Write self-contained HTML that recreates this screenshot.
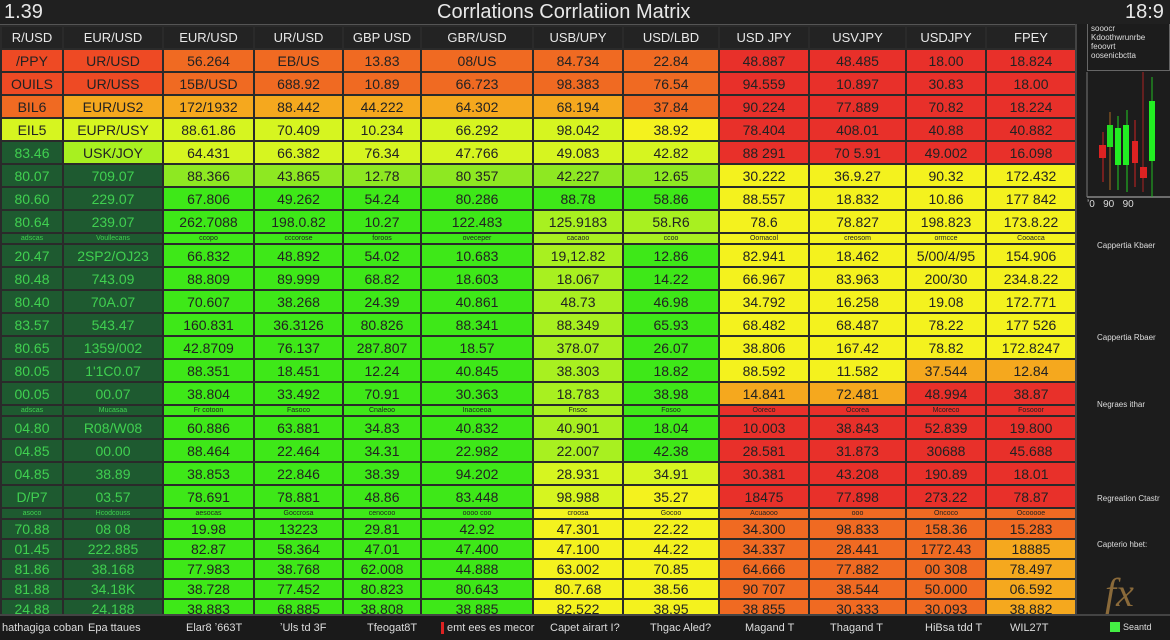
<!DOCTYPE html><html><head><meta charset="utf-8"><style>
body{margin:0;width:1170px;height:638px;background:#1e1e1e;overflow:hidden;font-family:"Liberation Sans",sans-serif;position:relative}
.top{position:absolute;left:0;top:0;width:1170px;height:24px;background:#202020;border-bottom:2px solid #555}
.top span{position:absolute;color:#e8e8e8;font-size:20px;top:1px}
table{position:absolute;left:0;top:25px;border-collapse:collapse;table-layout:fixed;width:1075px}
td{border:2px solid #2a2a2a;text-align:center;font-size:14px;color:#222;padding:0;white-space:nowrap;overflow:hidden;height:21px;line-height:18px}
tr.h td{background:#232323;color:#e8e8e8;font-size:13px;height:21px}
tr.t td{height:9px;font-size:7px;line-height:8px}
tr.s td{height:17px}
.r{background:#e8302a}.o{background:#f06a22}.oy{background:#f5a81e}.y{background:#f4f21e}.yg{background:#d6f520}.lg{background:#8ee822}.g{background:#3ee818}.dg{background:#1e5a30;color:#40d050}.l{background:#a8f020}.ro{background:#ee4a24}
.side{position:absolute;left:1075px;top:24px;width:95px;height:590px;background:#1c1c1c;border-left:2px solid #444}
.side div{position:absolute;color:#ddd;font-size:8px}
.foot{position:absolute;left:0;top:614px;width:1170px;height:24px;background:#1a1a1a;border-top:2px solid #444}
.foot span{position:absolute;top:6px;color:#ddd;font-size:11px}
</style></head><body>
<div class="top"><span style="left:4px">1.39</span><span style="left:437px">Corrlations Corrlatiion Matrix</span><span style="left:1125px">18:9</span></div>
<table>
<colgroup><col style="width:62px"><col style="width:100px"><col style="width:91px"><col style="width:89px"><col style="width:78px"><col style="width:112px"><col style="width:90px"><col style="width:96px"><col style="width:90px"><col style="width:97px"><col style="width:80px"><col style="width:90px"></colgroup>
<tr class="h"><td>R/USD</td><td>EUR/USD</td><td>EUR/USD</td><td>UR/USD</td><td>GBP USD</td><td>GBR/USD</td><td>USB/UPY</td><td>USD/LBD</td><td>USD JPY</td><td>USVJPY</td><td>USDJPY</td><td>FPEY</td></tr>
<tr><td class="ro">/PPY</td><td class="ro">UR/USD</td><td class="o">56.264</td><td class="o">EB/US</td><td class="o">13.83</td><td class="o">08/US</td><td class="o">84.734</td><td class="o">22.84</td><td class="r">48.887</td><td class="r">48.485</td><td class="r">18.00</td><td class="r">18.824</td></tr>
<tr><td class="ro">OUILS</td><td class="ro">UR/USS</td><td class="o">15B/USD</td><td class="o">688.92</td><td class="o">10.89</td><td class="o">66.723</td><td class="o">98.383</td><td class="o">76.54</td><td class="r">94.559</td><td class="r">10.897</td><td class="r">30.83</td><td class="r">18.00</td></tr>
<tr><td class="o">BIL6</td><td class="oy">EUR/US2</td><td class="oy">172/1932</td><td class="oy">88.442</td><td class="oy">44.222</td><td class="oy">64.302</td><td class="oy">68.194</td><td class="o">37.84</td><td class="r">90.224</td><td class="r">77.889</td><td class="r">70.82</td><td class="r">18.224</td></tr>
<tr><td class="yg">EIL5</td><td class="yg">EUPR/USY</td><td class="yg">88.61.86</td><td class="yg">70.409</td><td class="yg">10.234</td><td class="yg">66.292</td><td class="yg">98.042</td><td class="y">38.92</td><td class="r">78.404</td><td class="r">408.01</td><td class="r">40.88</td><td class="r">40.882</td></tr>
<tr><td class="dg">83.46</td><td class="l">USK/JOY</td><td class="yg">64.431</td><td class="yg">66.382</td><td class="yg">76.34</td><td class="yg">47.766</td><td class="yg">49.083</td><td class="yg">42.82</td><td class="r">88 291</td><td class="r">70 5.91</td><td class="r">49.002</td><td class="r">16.098</td></tr>
<tr><td class="dg">80.07</td><td class="dg">709.07</td><td class="lg">88.366</td><td class="lg">43.865</td><td class="lg">12.78</td><td class="lg">80 357</td><td class="lg">42.227</td><td class="lg">12.65</td><td class="y">30.222</td><td class="y">36.9.27</td><td class="y">90.32</td><td class="y">172.432</td></tr>
<tr><td class="dg">80.60</td><td class="dg">229.07</td><td class="g">67.806</td><td class="g">49.262</td><td class="g">54.24</td><td class="g">80.286</td><td class="g">88.78</td><td class="g">58.86</td><td class="y">88.557</td><td class="y">18.832</td><td class="y">10.86</td><td class="y">177 842</td></tr>
<tr><td class="dg">80.64</td><td class="dg">239.07</td><td class="g">262.7088</td><td class="g">198.0.82</td><td class="g">10.27</td><td class="g">122.483</td><td class="l">125.9183</td><td class="l">58.R6</td><td class="y">78.6</td><td class="y">78.827</td><td class="y">198.823</td><td class="y">173.8.22</td></tr>
<tr class="t"><td class="dg">adscas</td><td class="dg">Voullecans</td><td class="g">ccopo</td><td class="g">cccorose</td><td class="g">foroos</td><td class="g">oveceper</td><td class="l">cacaoo</td><td class="l">ccoo</td><td class="y">Oomacol</td><td class="y">creosom</td><td class="y">ormcce</td><td class="y">Cooacca</td></tr>
<tr><td class="dg">20.47</td><td class="dg">2SP2/OJ23</td><td class="g">66.832</td><td class="g">48.892</td><td class="g">54.02</td><td class="g">10.683</td><td class="l">19,12.82</td><td class="g">12.86</td><td class="y">82.941</td><td class="y">18.462</td><td class="y">5/00/4/95</td><td class="y">154.906</td></tr>
<tr><td class="dg">80.48</td><td class="dg">743.09</td><td class="g">88.809</td><td class="g">89.999</td><td class="g">68.82</td><td class="g">18.603</td><td class="l">18.067</td><td class="g">14.22</td><td class="y">66.967</td><td class="y">83.963</td><td class="y">200/30</td><td class="y">234.8.22</td></tr>
<tr><td class="dg">80.40</td><td class="dg">70A.07</td><td class="g">70.607</td><td class="g">38.268</td><td class="g">24.39</td><td class="g">40.861</td><td class="l">48.73</td><td class="g">46.98</td><td class="y">34.792</td><td class="y">16.258</td><td class="y">19.08</td><td class="y">172.771</td></tr>
<tr><td class="dg">83.57</td><td class="dg">543.47</td><td class="g">160.831</td><td class="g">36.3126</td><td class="g">80.826</td><td class="g">88.341</td><td class="l">88.349</td><td class="g">65.93</td><td class="y">68.482</td><td class="y">68.487</td><td class="y">78.22</td><td class="y">177 526</td></tr>
<tr><td class="dg">80.65</td><td class="dg">1359/002</td><td class="g">42.8709</td><td class="g">76.137</td><td class="g">287.807</td><td class="g">18.57</td><td class="l">378.07</td><td class="g">26.07</td><td class="y">38.806</td><td class="y">167.42</td><td class="y">78.82</td><td class="y">172.8247</td></tr>
<tr><td class="dg">80.05</td><td class="dg">1'1C0.07</td><td class="g">88.351</td><td class="g">18.451</td><td class="g">12.24</td><td class="g">40.845</td><td class="l">38.303</td><td class="g">18.82</td><td class="y">88.592</td><td class="y">11.582</td><td class="oy">37.544</td><td class="oy">12.84</td></tr>
<tr><td class="dg">00.05</td><td class="dg">00.07</td><td class="g">38.804</td><td class="g">33.492</td><td class="g">70.91</td><td class="g">30.363</td><td class="l">18.783</td><td class="g">38.98</td><td class="oy">14.841</td><td class="oy">72.481</td><td class="r">48.994</td><td class="r">38.87</td></tr>
<tr class="t"><td class="dg">adscas</td><td class="dg">Mucasaa</td><td class="g">Fr cotoon</td><td class="g">Fasoco</td><td class="g">Cnaleoo</td><td class="g">Inacoeoa</td><td class="l">Fnsoc</td><td class="g">Fosoo</td><td class="r">Ooreco</td><td class="r">Ocorea</td><td class="r">Mcoreco</td><td class="r">Fosooor</td></tr>
<tr><td class="dg">04.80</td><td class="dg">R08/W08</td><td class="g">60.886</td><td class="g">63.881</td><td class="g">34.83</td><td class="g">40.832</td><td class="l">40.901</td><td class="g">18.04</td><td class="r">10.003</td><td class="r">38.843</td><td class="r">52.839</td><td class="r">19.800</td></tr>
<tr><td class="dg">04.85</td><td class="dg">00.00</td><td class="g">88.464</td><td class="g">22.464</td><td class="g">34.31</td><td class="g">22.982</td><td class="l">22.007</td><td class="g">42.38</td><td class="r">28.581</td><td class="r">31.873</td><td class="r">30688</td><td class="r">45.688</td></tr>
<tr><td class="dg">04.85</td><td class="dg">38.89</td><td class="g">38.853</td><td class="g">22.846</td><td class="g">38.39</td><td class="g">94.202</td><td class="yg">28.931</td><td class="yg">34.91</td><td class="r">30.381</td><td class="r">43.208</td><td class="r">190.89</td><td class="r">18.01</td></tr>
<tr><td class="dg">D/P7</td><td class="dg">03.57</td><td class="g">78.691</td><td class="g">78.881</td><td class="g">48.86</td><td class="g">83.448</td><td class="yg">98.988</td><td class="y">35.27</td><td class="r">18475</td><td class="r">77.898</td><td class="r">273.22</td><td class="r">78.87</td></tr>
<tr class="t"><td class="dg">asoco</td><td class="dg">Hcodcouss</td><td class="g">aesocas</td><td class="g">Goccrosa</td><td class="g">cenocoo</td><td class="g">oooo coo</td><td class="y">croosa</td><td class="y">Gocoo</td><td class="o">Acuaooo</td><td class="o">ooo</td><td class="o">Oncoco</td><td class="o">Ocooooe</td></tr>
<tr class="s"><td class="dg">70.88</td><td class="dg">08 08</td><td class="g">19.98</td><td class="g">13223</td><td class="g">29.81</td><td class="g">42.92</td><td class="y">47.301</td><td class="y">22.22</td><td class="o">34.300</td><td class="o">98.833</td><td class="o">158.36</td><td class="o">15.283</td></tr>
<tr class="s"><td class="dg">01.45</td><td class="dg">222.885</td><td class="g">82.87</td><td class="g">58.364</td><td class="g">47.01</td><td class="g">47.400</td><td class="y">47.100</td><td class="y">44.22</td><td class="o">34.337</td><td class="o">28.441</td><td class="o">1772.43</td><td class="oy">18885</td></tr>
<tr class="s"><td class="dg">81.86</td><td class="dg">38.168</td><td class="g">77.983</td><td class="g">38.768</td><td class="g">62.008</td><td class="g">44.888</td><td class="y">63.002</td><td class="y">70.85</td><td class="o">64.666</td><td class="o">77.882</td><td class="o">00 308</td><td class="oy">78.497</td></tr>
<tr class="s"><td class="dg">81.88</td><td class="dg">34.18K</td><td class="g">38.728</td><td class="g">77.452</td><td class="g">80.823</td><td class="g">80.643</td><td class="y">80.7.68</td><td class="y">38.56</td><td class="o">90 707</td><td class="o">38.544</td><td class="o">50.000</td><td class="oy">06.592</td></tr>
<tr class="s"><td class="dg">24.88</td><td class="dg">24.188</td><td class="g">38.883</td><td class="g">68.885</td><td class="g">38.808</td><td class="g">38 885</td><td class="y">82.522</td><td class="y">38.95</td><td class="o">38 855</td><td class="o">30.333</td><td class="o">30.093</td><td class="oy">38.882</td></tr>
</table>
<div class="side">
<div style="left:10px;top:0;width:78px;height:46px;border:1px solid #666;border-top:none;line-height:9px;padding-left:3px">sooocr<br>Kdoothwrunrbe<br>feoovrt<br>oosenicbctta</div>
<svg style="position:absolute;left:0;top:48px" width="95" height="130">
<line x1="10" y1="125" x2="95" y2="125" stroke="#bbb"/><line x1="10" y1="0" x2="10" y2="125" stroke="#777"/>
<line x1="26" y1="60" x2="26" y2="110" stroke="#c22"/><rect x="22" y="73" width="7" height="13" fill="#d22"/>
<line x1="33" y1="40" x2="33" y2="118" stroke="#a62"/><rect x="30" y="53" width="6" height="22" fill="#2d2"/>
<line x1="41" y1="44" x2="41" y2="118" stroke="#2c2"/><rect x="38" y="56" width="6" height="37" fill="#2e2"/>
<line x1="50" y1="38" x2="50" y2="120" stroke="#2c2"/><rect x="46" y="53" width="6" height="40" fill="#2e2"/>
<line x1="58" y1="48" x2="58" y2="115" stroke="#c22"/><rect x="55" y="69" width="6" height="22" fill="#d22"/>
<line x1="66" y1="0" x2="66" y2="120" stroke="#a22"/><rect x="63" y="95" width="7" height="11" fill="#d22"/>
<line x1="75" y1="5" x2="75" y2="125" stroke="#2b2"/><rect x="72" y="29" width="6" height="60" fill="#2e2"/>
</svg>
<div style="left:10px;top:175px;font-size:10px">ʼ0 &nbsp; 90 &nbsp; 90</div>
<div style="left:20px;top:217px">Cappertia Kbaer</div>
<div style="left:20px;top:309px">Cappertia Rbaer</div>
<div style="left:20px;top:376px">Negraes ithar</div>
<div style="left:20px;top:470px">Regreation Ctastr</div>
<div style="left:20px;top:516px">Capterio hbet:</div>
<div style="left:28px;top:545px;font-size:40px;color:#8a6a3a;font-style:italic;font-family:'Liberation Serif',serif">fx</div>
</div>
<div class="foot">
<span style="left:2px">hathagiga coban</span><span style="left:88px">Epa ttaues</span><span style="left:186px">Elar8 ʼ663T</span><span style="left:280px">ʼUls td 3F</span><span style="left:367px">Tfeogat8T</span><span style="left:441px;border-left:3px solid #d22;padding-left:3px">emt ees es mecor</span><span style="left:550px">Capet airart I?</span><span style="left:650px">Thgac Aled?</span><span style="left:745px">Magand T</span><span style="left:830px">Thagand T</span><span style="left:925px">HiBsa tdd T</span><span style="left:1010px">WIL27T</span><span style="left:1110px;border-left:10px solid #4e4;padding-left:3px;font-size:9px">Seantd</span>
</div>
</body></html>
